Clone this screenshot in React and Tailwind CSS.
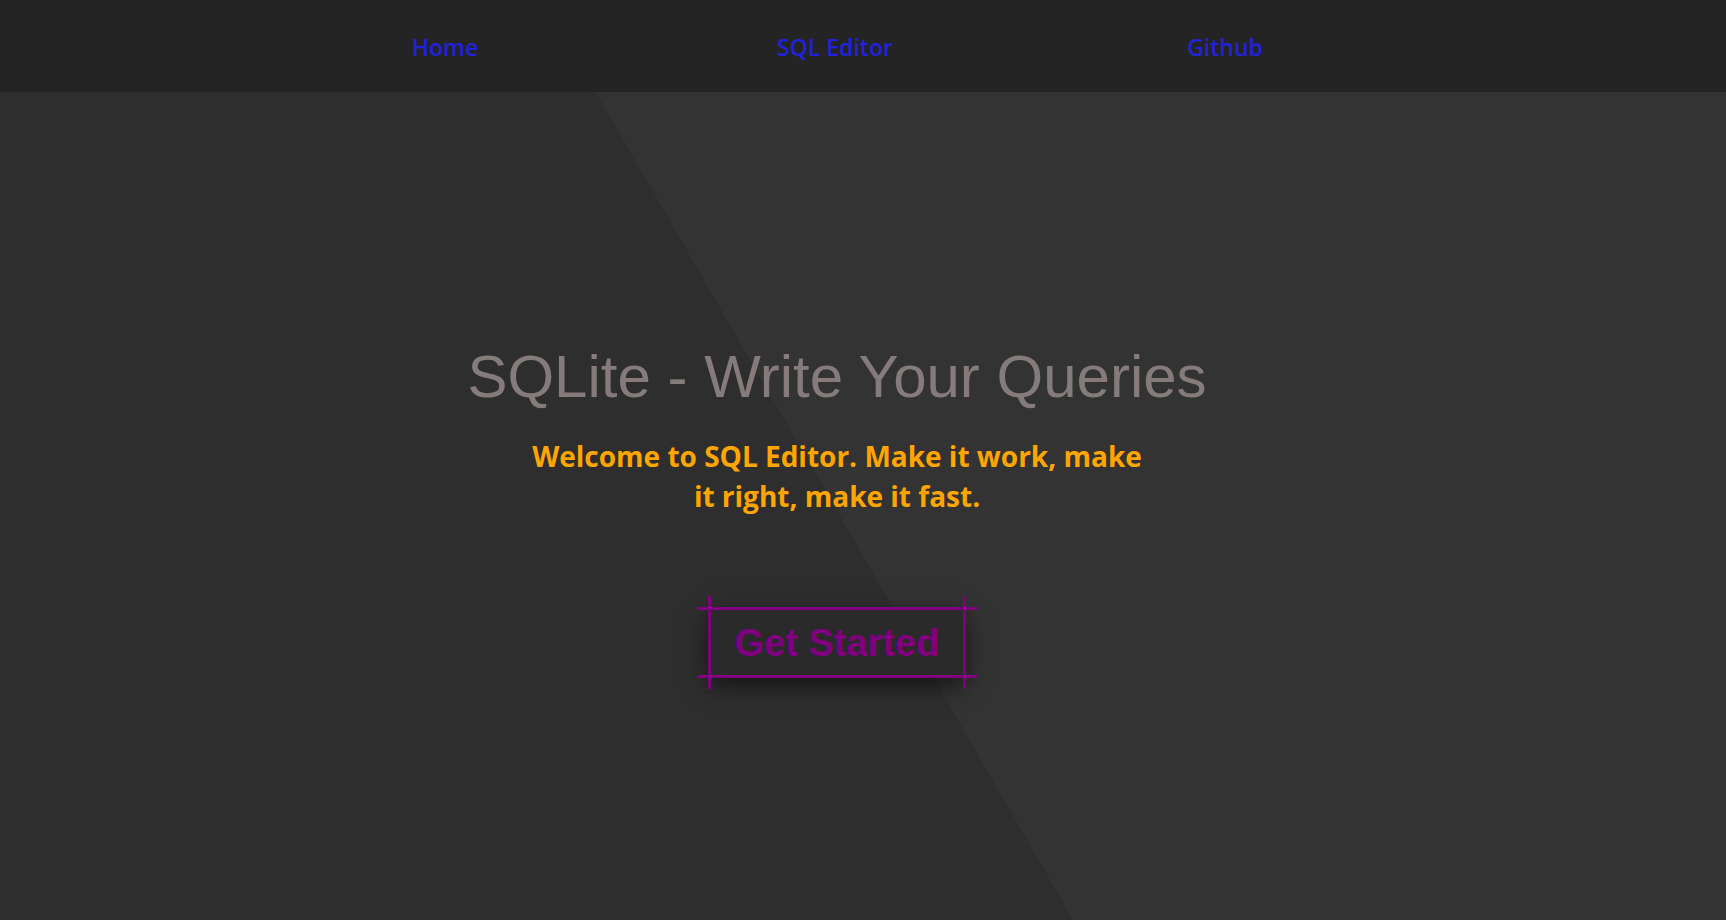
import React from "react";

// ====================================================================
// Navbar
// ====================================================================
const links = ["Home", "SQL Editor", "Github"];

const Navbar = () => (
  <nav className="h-[92px] shrink-0 bg-[#242424] flex items-center pl-[250px] pt-[2px]">
    {links.map((l) => (
      <a
        key={l}
        href="#"
        className="w-[390px] text-center text-[23px] font-semibold text-[#2222dd]"
        style={{ fontFamily: '"Open Sans", sans-serif' }}>
        {l}
      </a>
    ))}
  </nav>
);

// ====================================================================
// Get Started button with crosshair corners
// ====================================================================
const GetStarted = () => (
  <button className="relative w-[258px] h-[71px] border-[3px] border-[#800080] bg-[#2a2a2a] shadow-[0_8px_22px_rgba(0,0,0,0.55)] flex items-center justify-center">
    {/* extended lines */}
    <span className="absolute top-[-3px] left-[-14px] right-[-14px] h-[3px] bg-[#800080]" />
    <span className="absolute bottom-[-3px] left-[-14px] right-[-14px] h-[3px] bg-[#800080]" />
    <span className="absolute left-[-3px] top-[-14px] bottom-[-14px] w-[3px] bg-[#800080]" />
    <span className="absolute right-[-3px] top-[-14px] bottom-[-14px] w-[3px] bg-[#800080]" />
    <span
      className="text-[38px] font-bold text-[#800080] leading-none"
      style={{ fontFamily: '"Liberation Sans", Arial, sans-serif' }}>
      Get Started
    </span>
  </button>
);

export default function App() {
  return (
    <div className="h-screen flex flex-col bg-[#2e2e2e] overflow-hidden">
      <Navbar />

      <main className="relative flex-1">
        {/* diagonal lighter panel */}
        <div className="absolute inset-0 bg-[#333333] [clip-path:polygon(34.5%_0,100%_0,100%_100%,62.17%_100%)]" />

        <div className="relative flex flex-col items-center pt-[251px] pr-[52px]">
          <h1
            className="text-[60px] leading-[68px] font-normal text-[#857b7b]"
            style={{ fontFamily: '"Liberation Sans", Arial, sans-serif' }}>
            SQLite - Write Your Queries
          </h1>

          <p
            className="mt-[25px] text-[28px] leading-[40px] font-bold text-[#ffa500] text-center"
            style={{ fontFamily: '"Open Sans", sans-serif' }}>
            Welcome to SQL Editor. Make it work, make
            <br />
            it right, make it fast.
          </p>

          <div className="mt-[91px]">
            <GetStarted />
          </div>
        </div>
      </main>
    </div>
  );
}
